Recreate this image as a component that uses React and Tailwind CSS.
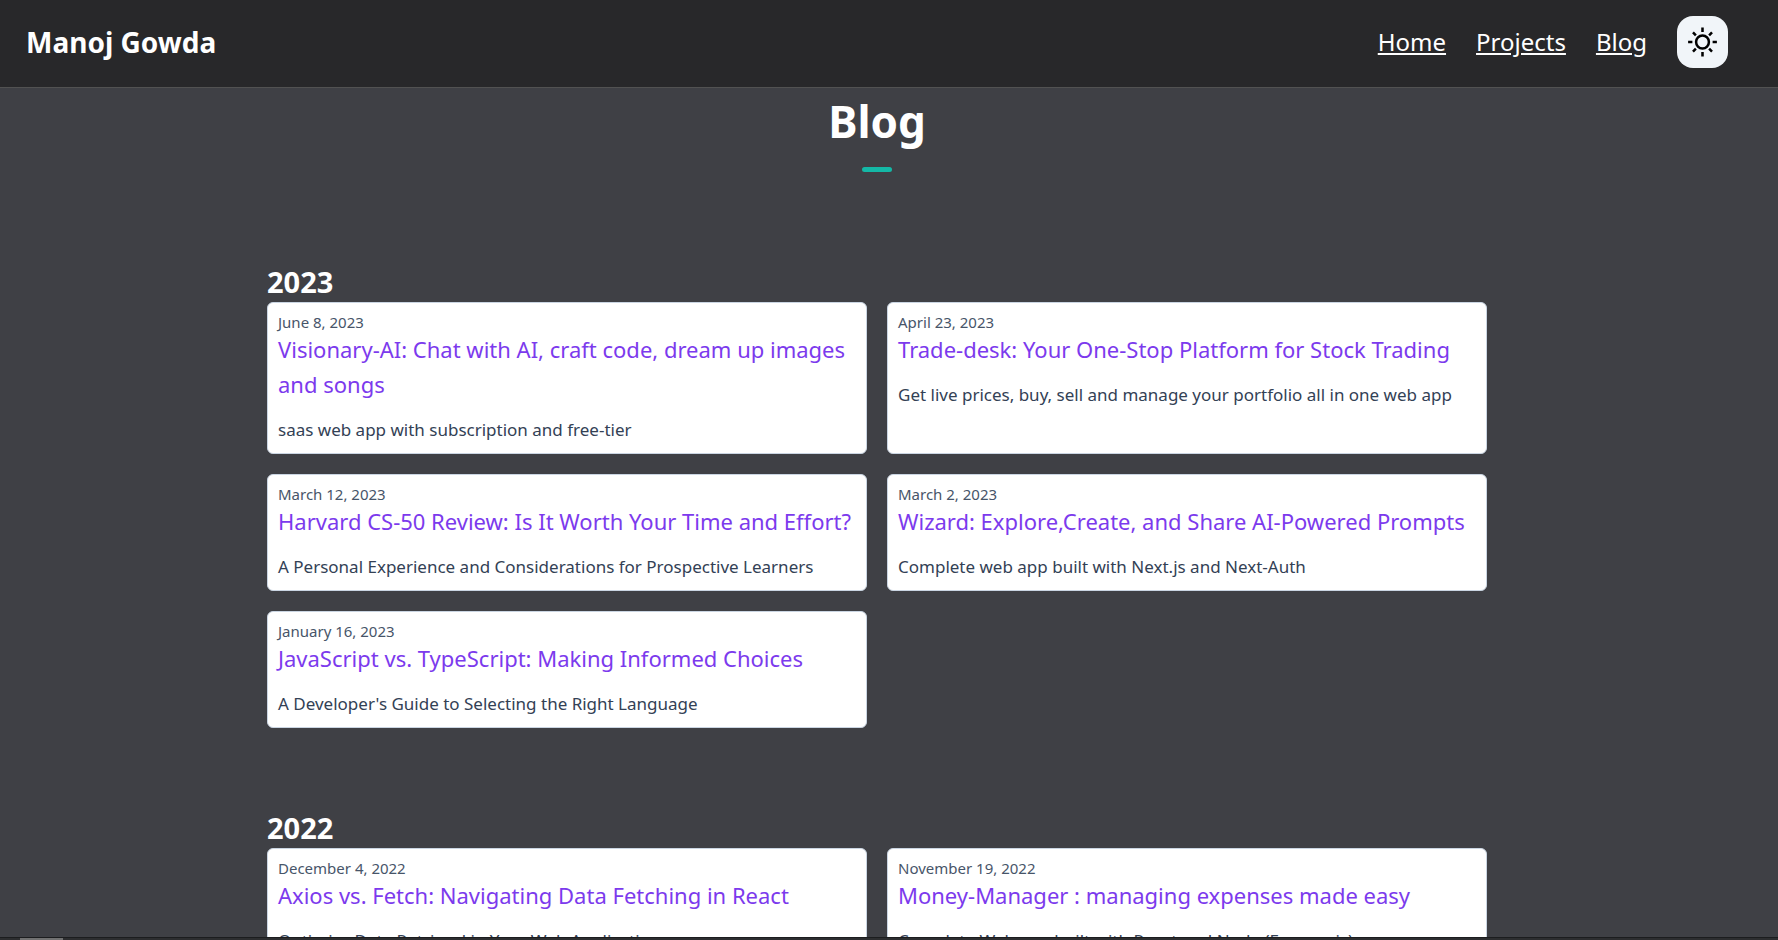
const years = [
  {
    year: "2023",
    posts: [
      {
        date: "June 8, 2023",
        title: "Visionary-AI: Chat with AI, craft code, dream up images and songs",
        text: "saas web app with subscription and free-tier",
      },
      {
        date: "April 23, 2023",
        title: "Trade-desk: Your One-Stop Platform for Stock Trading",
        text: "Get live prices, buy, sell and manage your portfolio all in one web app",
      },
      {
        date: "March 12, 2023",
        title: "Harvard CS-50 Review: Is It Worth Your Time and Effort?",
        text: "A Personal Experience and Considerations for Prospective Learners",
      },
      {
        date: "March 2, 2023",
        title: "Wizard: Explore,Create, and Share AI-Powered Prompts",
        text: "Complete web app built with Next.js and Next-Auth",
      },
      {
        date: "January 16, 2023",
        title: "JavaScript vs. TypeScript: Making Informed Choices",
        text: "A Developer's Guide to Selecting the Right Language",
      },
    ],
  },
  {
    year: "2022",
    posts: [
      {
        date: "December 4, 2022",
        title: "Axios vs. Fetch: Navigating Data Fetching in React",
        text: "Optimize Data Retrieval in Your Web Application",
      },
      {
        date: "November 19, 2022",
        title: "Money-Manager : managing expenses made easy",
        text: "Complete Web app built with React and Node (Express.js)",
      },
    ],
  },
];

const links = ["Home", "Projects", "Blog"];

function SunIcon() {
  return (
    <svg
      viewBox="0 0 36 36"
      className="h-9 w-[35px]"
      fill="none"
      stroke="currentColor"
      strokeWidth="2.6"
      aria-hidden="true"
    >
      <circle cx="18" cy="18" r="6.6" />
      <path d="M18 3.2v4.4M18 28.4v4.4M3.2 18h4.4M28.4 18h4.4" />
      <path d="M8.2 8.2l3 3M24.8 24.8l3 3M27.8 8.2l-3 3M11.2 24.8l-3 3" />
    </svg>
  );
}

function Header() {
  return (
    <header className="flex shrink-0 items-center justify-between border-b border-[#525252] bg-[#28282a] pt-4 pr-[50px] pb-[19px] pl-[26px] text-white">
      <span className="text-[28px] leading-8 font-bold">Manoj Gowda</span>
      <nav className="flex items-center gap-[30px]">
        {links.map((link) => (
          <a key={link} href="#" className="text-2xl leading-8 underline">
            {link}
          </a>
        ))}
        <button
          type="button"
          aria-label="Toggle light mode"
          className="rounded-2xl bg-slate-100 p-2 text-black"
        >
          <SunIcon />
        </button>
      </nav>
    </header>
  );
}

function PostCard({ post }) {
  return (
    <article className="rounded-md border border-slate-300 bg-white p-2.5">
      <p className="text-[15px] leading-[19px] text-[#475569]">{post.date}</p>
      <h3 className="text-[22px] leading-[35px] text-[#7c3aed]">
        <a href="#">{post.title}</a>
      </h3>
      <p className="mt-3.5 text-[17px] leading-[27px] text-[#334155]">{post.text}</p>
    </article>
  );
}

export default function App() {
  return (
    <div className="flex h-screen flex-col bg-[#3f4045] font-['Noto_Sans',sans-serif]">
      <Header />
      <main className="min-h-0 flex-1 overflow-y-auto pr-6 [scrollbar-width:none]">
        <div className="mx-auto max-w-[1220px]">
          <div className="flex flex-col items-center pt-1.5">
            <h1 className="text-[44px] leading-[54px] font-bold text-white">Blog</h1>
            <span className="mt-[19px] h-[5px] w-[30px] rounded-full bg-[#14b8a6]" />
          </div>
          {years.map(({ year, posts }) => (
            <section key={year} className="mt-20 first-of-type:mt-[90px]">
              <h2 className="text-[29px] leading-10 font-bold text-white">{year}</h2>
              <div className="grid grid-cols-2 gap-5">
                {posts.map((post) => (
                  <PostCard key={post.title} post={post} />
                ))}
              </div>
            </section>
          ))}
        </div>
      </main>
      <footer className="h-[3px] shrink-0 border-t border-[#1c1d1f] bg-[#2d2e30] pl-5">
        <div className="h-[2px] w-[43px] bg-[#727272]" />
      </footer>
    </div>
  );
}
